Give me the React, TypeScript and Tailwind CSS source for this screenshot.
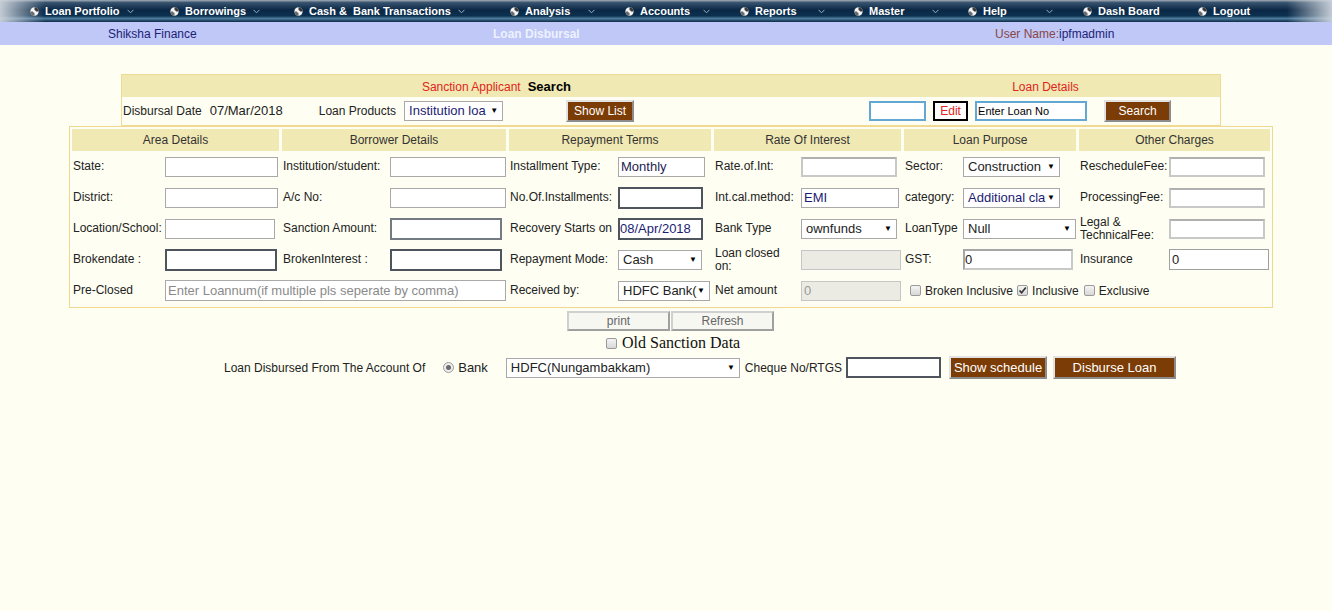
import React from 'react';

// LoanDisbursal.tsx

const navItems = [
  { label: 'Loan Portfolio', w: 'w-[140px]', chev: true },
  { label: 'Borrowings', w: 'w-[124px]', chev: true },
  { label: 'Cash &\u00a0 Bank Transactions', w: 'w-[216px]', chev: true },
  { label: 'Analysis', w: 'w-[115px]', chev: true },
  { label: 'Accounts', w: 'w-[115px]', chev: true },
  { label: 'Reports', w: 'w-[114px]', chev: true },
  { label: 'Master', w: 'w-[114px]', chev: true },
  { label: 'Help', w: 'w-[115px]', chev: true },
  { label: 'Dash Board', w: 'w-[115px]', chev: false },
  { label: 'Logout', w: 'w-[115px]', chev: false },
];

const Ball = () => (
  <svg width="9" height="9" viewBox="0 0 10 10" className="shrink-0">
    <circle cx="5" cy="5" r="4.6" fill="#f4f4f4" />
    <path d="M5 0.4 A4.6 4.6 0 0 1 9.6 5 L5 5 Z" fill="#3a3a3a" />
    <path d="M5 5 L0.4 5 A4.6 4.6 0 0 0 5 9.6 Z" fill="#6a6a6a" />
    <circle cx="5" cy="5" r="1.4" fill="#ffffff" />
  </svg>
);

const Chev = () => (
  <svg width="7" height="5" viewBox="0 0 7 5" className="ml-[7px] shrink-0">
    <polyline points="0.5,0.8 3.5,3.8 6.5,0.8" fill="none" stroke="#9fb0c0" strokeWidth="1" />
  </svg>
);

const Sel = ({ w, text, navy }: { w: string; text: string; navy?: boolean }) => (
  <div
    className={`h-[20px] ${w} border border-[#a9a9a9] bg-white flex items-center pl-[4px] pr-[4px] text-[13px] ${
      navy ? 'text-[#1c1c72]' : 'text-[#222]'
    }`}
  >
    <span className="flex-1 min-w-0 whitespace-nowrap">{text}</span>
    <span className="ml-[2px] shrink-0 text-[8px] text-black">▼</span>
  </div>
);

const Box = ({ c, children }: { c: string; children?: React.ReactNode }) => (
  <div className={`flex items-center px-[2px] text-[13px] whitespace-nowrap overflow-hidden ${c}`}>{children}</div>
);

const Check = ({ on }: { on?: boolean }) => (
  <span className="w-[11px] h-[11px] rounded-[2px] border border-[#9a9a9a] bg-gradient-to-b from-[#f4f4f4] to-[#d8d8d8] flex items-center justify-center shrink-0">
    {on && (
      <svg width="9" height="9" viewBox="0 0 9 9">
        <polyline points="1.5,4.5 3.6,6.8 7.8,1.5" fill="none" stroke="#333" strokeWidth="1.6" />
      </svg>
    )}
  </span>
);

const Cell = ({ lw, label, children, span }: { lw: string; label: React.ReactNode; children?: React.ReactNode; span?: string }) => (
  <div className={`h-[31px] flex items-center ${span ?? ''}`}>
    <div className={`${lw} shrink-0 pl-[1px] text-[12px] leading-[13px] text-[#222]`}>{label}</div>
    {children}
  </div>
);

const brown =
  'bg-[#7b3c06] text-white border-2 border-t-[#e2e2e2] border-l-[#e2e2e2] border-b-[#8c8c8c] border-r-[#8c8c8c] flex items-center justify-center';

const App: React.FC = () => {
  return (
    <div className="min-h-[611px] bg-[#fefef3] font-['Liberation_Sans',Arial,sans-serif] text-[#222]">
      {/* top menu */}
      <div className="h-[22px] flex items-center pl-[30px] bg-[linear-gradient(to_right,rgba(205,212,220,0.95),rgba(205,212,220,0)_45px,rgba(205,212,220,0)_calc(100%-45px),rgba(205,212,220,0.95)),linear-gradient(to_bottom,#a4adb6_0%,#36526e_12%,#0b2846_45%,#0c3050_72%,#4d7b9b_84%,#0b2846_100%)]">
        {navItems.map((n) => (
          <div key={n.label} className={`${n.w} shrink-0 flex items-center`}>
            <Ball />
            <span className="ml-[6px] min-w-[56px] text-[11px] font-bold text-white whitespace-nowrap">{n.label}</span>
            {n.chev && <Chev />}
          </div>
        ))}
      </div>
      {/* title band */}
      <div className="h-[23px] bg-[#bfc8f6] flex items-center text-[12px]">
        <span className="ml-[108px] w-[385px] text-[#1d1d78]">Shiksha Finance</span>
        <span className="w-[502px] font-bold text-[#eef1ff]">Loan Disbursal</span>
        <span className="text-[#8a4646]">User Name:</span>
        <span className="text-[#1d1d78]">ipfmadmin</span>
      </div>

      {/* search box */}
      <div className="mt-[29px] ml-[121px] w-[1100px] border border-[#efdb92]">
        <div className="h-[22px] bg-[#f1e9b3] flex items-center text-[12px] pt-[1px]">
          <div className="w-[749px] text-center">
            <span className="text-[#e0241c]">Sanction Applicant</span>
            <span className="ml-[7px] text-[13px] font-bold text-black">Search</span>
          </div>
          <div className="flex-1 text-center text-[#e0241c]">Loan Details</div>
        </div>
        <div className="h-[28px] flex items-center text-[12px]">
          <span className="ml-[1px]">Disbursal Date</span>
          <span className="ml-[8px] text-[13px]">07/Mar/2018</span>
          <span className="ml-[36px]">Loan Products</span>
          <div className="ml-[8px]">
            <Sel w="w-[99px]" text="Institution loa" navy />
          </div>
          <div className={`ml-[63px] h-[22px] w-[68px] text-[12px] ${brown}`}>Show List</div>
          <div className="ml-[235px] h-[20px] w-[57px] border-2 border-[#62a8d4] bg-white" />
          <div className="ml-[7px] h-[20px] w-[35px] border-2 border-black bg-white text-[#e0241c] flex items-center justify-center">
            Edit
          </div>
          <div className="ml-[7px] h-[20px] w-[112px] border-2 border-[#62a8d4] bg-white text-[11px] text-black flex items-center pl-[1px]">
            Enter Loan No
          </div>
          <div className={`ml-[17px] h-[22px] w-[67px] text-[12px] ${brown}`}>Search</div>
        </div>
      </div>

      {/* main details */}
      <div className="ml-[69px] w-[1204px] border border-[#efd98e] pt-[2px] pb-[1px] px-[2px]">
        <div className="grid grid-cols-[207px_224px_202px_187px_172px_191px] gap-x-[3px]">
          {['Area Details', 'Borrower Details', 'Repayment Terms', 'Rate Of Interest', 'Loan Purpose', 'Other Charges'].map((h) => (
            <div key={h} className="h-[22px] bg-[#f1e9b3] flex items-center justify-center text-[12px] text-[#333]">
              {h}
            </div>
          ))}

          {/* row 1 */}
          <Cell lw="w-[93px]" label="State:">
            <Box c="h-[20px] w-[113px] border border-[#a9a9a9] bg-white" />
          </Cell>
          <Cell lw="w-[108px]" label="Institution/student:">
            <Box c="h-[20px] w-[116px] border border-[#a9a9a9] bg-white" />
          </Cell>
          <Cell lw="w-[109px]" label="Installment Type:">
            <Box c="h-[20px] w-[87px] border border-[#a9a9a9] bg-white text-[#1c1c52]">Monthly</Box>
          </Cell>
          <Cell lw="w-[87px]" label="Rate.of.Int:">
            <Box c="h-[20px] w-[96px] border-2 border-[#c8c8c8] border-t-[#b0b0b0] bg-white" />
          </Cell>
          <Cell lw="w-[59px]" label="Sector:">
            <Sel w="w-[97px]" text="Construction" />
          </Cell>
          <Cell lw="w-[90px]" label="RescheduleFee:">
            <Box c="h-[20px] w-[96px] border-2 border-[#c8c8c8] border-t-[#b0b0b0] bg-white" />
          </Cell>

          {/* row 2 */}
          <Cell lw="w-[93px]" label="District:">
            <Box c="h-[20px] w-[113px] border border-[#a9a9a9] bg-white" />
          </Cell>
          <Cell lw="w-[108px]" label="A/c No:">
            <Box c="h-[20px] w-[116px] border border-[#a9a9a9] bg-white" />
          </Cell>
          <Cell lw="w-[109px]" label="No.Of.Installments:">
            <Box c="h-[22px] w-[85px] border-2 border-[#4e555c] bg-white" />
          </Cell>
          <Cell lw="w-[87px]" label="Int.cal.method:">
            <Box c="h-[20px] w-[98px] border border-[#a9a9a9] bg-white text-[#1c1c72]">EMI</Box>
          </Cell>
          <Cell lw="w-[59px]" label="category:">
            <Sel w="w-[97px]" text="Additional cla" navy />
          </Cell>
          <Cell lw="w-[90px]" label="ProcessingFee:">
            <Box c="h-[20px] w-[96px] border-2 border-[#c8c8c8] border-t-[#b0b0b0] bg-white" />
          </Cell>

          {/* row 3 */}
          <Cell lw="w-[93px]" label="Location/School:">
            <Box c="h-[20px] w-[110px] border border-[#a9a9a9] bg-white" />
          </Cell>
          <Cell lw="w-[108px]" label="Sanction Amount:">
            <Box c="h-[22px] w-[112px] border-2 border-[#737a81] bg-white" />
          </Cell>
          <Cell lw="w-[109px]" label="Recovery Starts on">
            <Box c="h-[22px] w-[85px] border-2 border-[#4e555c] bg-white text-[#1c1c72] pl-0">08/Apr/2018</Box>
          </Cell>
          <Cell lw="w-[87px]" label="Bank Type">
            <Sel w="w-[96px]" text="ownfunds" />
          </Cell>
          <Cell lw="w-[59px]" label="LoanType">
            <Sel w="w-[113px]" text="Null" />
          </Cell>
          <Cell
            lw="w-[90px]"
            label={
              <>
                Legal &amp;
                <br />
                TechnicalFee:
              </>
            }
          >
            <Box c="h-[20px] w-[96px] border-2 border-[#c8c8c8] border-t-[#b0b0b0] bg-white" />
          </Cell>

          {/* row 4 */}
          <Cell lw="w-[93px]" label="Brokendate :">
            <Box c="h-[22px] w-[112px] border-2 border-[#4e555c] bg-white" />
          </Cell>
          <Cell lw="w-[108px]" label="BrokenInterest :">
            <Box c="h-[22px] w-[112px] border-2 border-[#4e555c] bg-white" />
          </Cell>
          <Cell lw="w-[109px]" label="Repayment Mode:">
            <Sel w="w-[84px]" text="Cash" />
          </Cell>
          <Cell
            lw="w-[87px]"
            label={
              <>
                Loan closed
                <br />
                on:
              </>
            }
          >
            <Box c="h-[20px] w-[100px] border border-[#c6c6c6] bg-[#ebebe4]" />
          </Cell>
          <Cell lw="w-[59px]" label="GST:">
            <Box c="h-[21px] w-[110px] border-2 border-[#c9c9c9] border-t-[#a6a6a6] border-l-[#a6a6a6] bg-white pl-0">0</Box>
          </Cell>
          <Cell lw="w-[90px]" label="Insurance">
            <Box c="h-[21px] w-[100px] border border-[#a0a0a0] bg-white">0</Box>
          </Cell>

          {/* row 5 */}
          <Cell lw="w-[93px]" label="Pre-Closed" span="col-span-2">
            <Box c="h-[21px] w-[344px] border border-[#a9a9a9] bg-white text-[#8a8a8a]">
              Enter Loannum(if multiple pls seperate by comma)
            </Box>
          </Cell>
          <Cell lw="w-[109px]" label="Received by:">
            <Sel w="w-[92px]" text="HDFC Bank(" />
          </Cell>
          <Cell lw="w-[87px]" label="Net amount">
            <Box c="h-[20px] w-[100px] border border-[#c6c6c6] bg-[#ebebe4] text-[#9a9a9a]">0</Box>
          </Cell>
          <div className="col-span-2 h-[31px] flex items-center text-[12px] pl-[6px]">
            <Check />
            <span className="ml-[4px]">Broken Inclusive</span>
            <span className="ml-[4px]">
              <Check on />
            </span>
            <span className="ml-[4px]">Inclusive</span>
            <span className="ml-[5px]">
              <Check />
            </span>
            <span className="ml-[4px]">Exclusive</span>
          </div>
        </div>
      </div>

      {/* actions */}
      <div className="ml-[567px] mt-[3px] flex">
        <div className="h-[20px] w-[103px] border-2 border-[#d0d0d0] border-b-[#a0a0a0] border-r-[#a0a0a0] bg-[#f7f7f2] text-[12px] text-[#666] flex items-center justify-center">
          print
        </div>
        <div className="ml-[1px] h-[20px] w-[103px] border-2 border-[#d0d0d0] border-b-[#a0a0a0] border-r-[#a0a0a0] bg-[#f7f7f2] text-[12px] text-[#666] flex items-center justify-center">
          Refresh
        </div>
      </div>
      <div className="ml-[606px] mt-[3px] h-[18px] flex items-center">
        <Check />
        <span className="ml-[5px] font-['Liberation_Serif',serif] text-[16px] text-[#111]">Old Sanction Data</span>
      </div>
      <div className="ml-[224px] mt-[4px] h-[23px] flex items-center">
        <span className="text-[12px]">Loan Disbursed From The Account Of</span>
        <span className="ml-[18px] w-[11px] h-[11px] rounded-full border border-[#9a9a9a] bg-[#eeeeee] flex items-center justify-center">
          <span className="w-[5px] h-[5px] rounded-full bg-[#6a6a6a]" />
        </span>
        <span className="ml-[4px] text-[13px]">Bank</span>
        <div className="ml-[18px]">
          <Sel w="w-[234px]" text="HDFC(Nungambakkam)" />
        </div>
        <span className="ml-[5px] text-[12px]">Cheque No/RTGS</span>
        <div className="ml-[4px] h-[21px] w-[95px] border-2 border-[#4e555c] bg-white" />
        <div className={`ml-[8px] h-[23px] w-[98px] text-[13px] whitespace-nowrap ${brown}`}>Show schedule</div>
        <div className={`ml-[6px] h-[23px] w-[123px] text-[13px] ${brown}`}>Disburse Loan</div>
      </div>
    </div>
  );
};

export default App;
